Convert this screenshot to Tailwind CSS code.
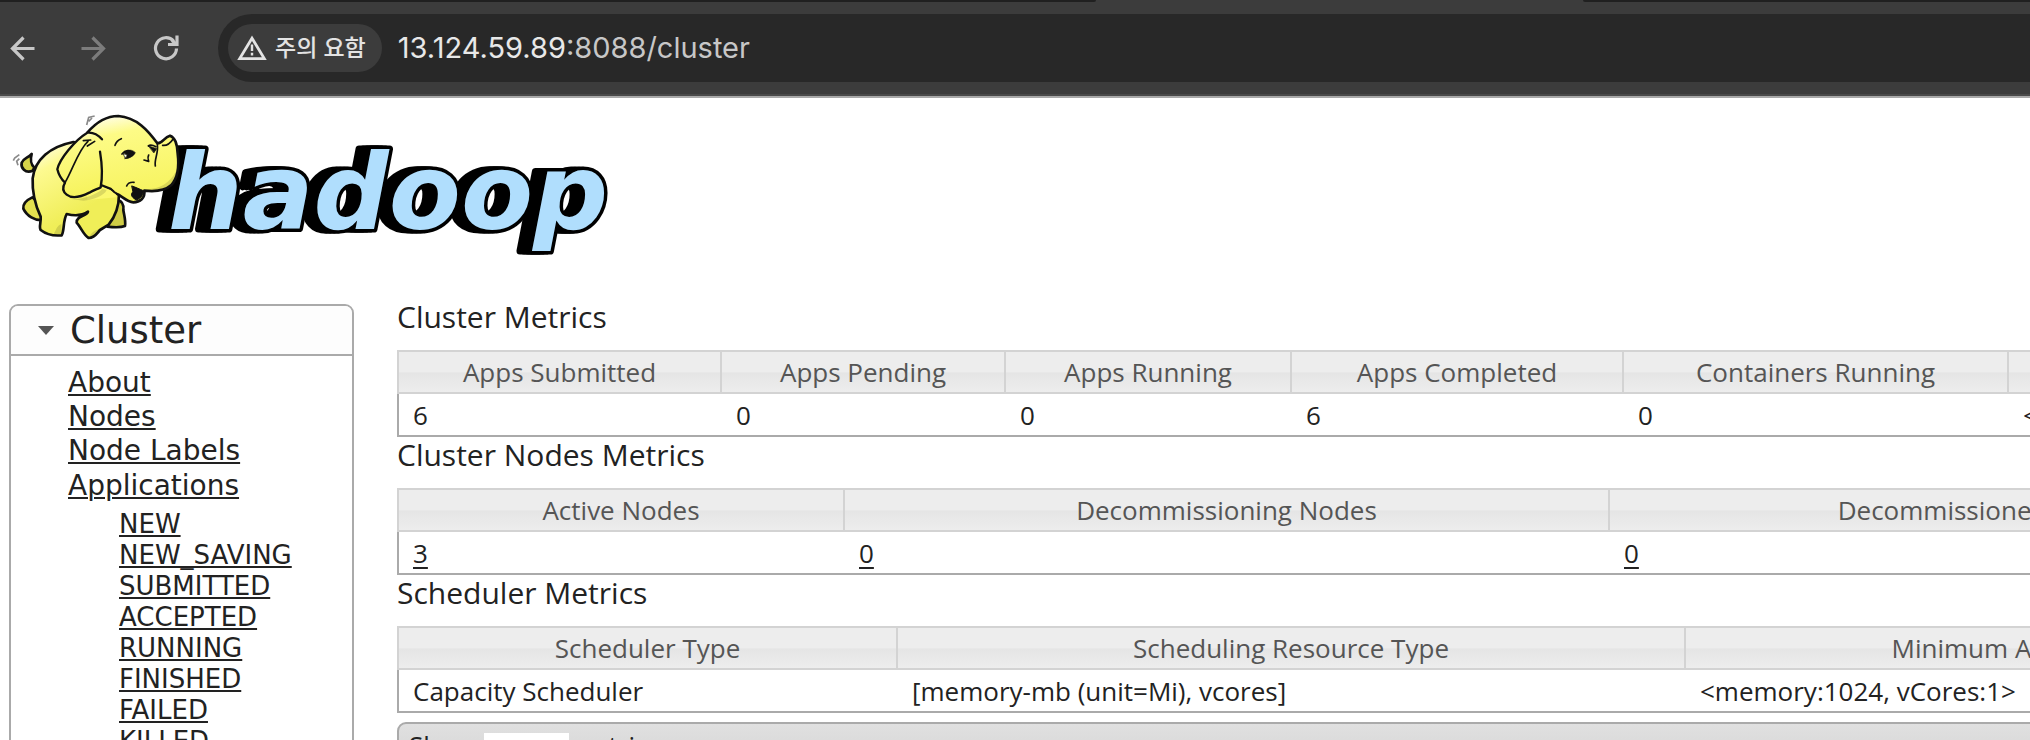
<!DOCTYPE html>
<html lang="ko">
<head>
<meta charset="utf-8">
<title>All Applications</title>
<script src="https://cdn.jsdelivr.net/npm/@tailwindcss/browser@4"></script>
</head>
<body class="bg-white text-[#222222] overflow-hidden h-screen">

<!-- Browser toolbar -->
<header class="font-['Inter','Noto_Sans_CJK_KR',sans-serif]">
  <div class="flex h-[2px] bg-[#3c3c3c]">
    <div class="w-[54%] rounded-br-[2px] bg-[#202020]"></div>
    <div class="w-[24%]"></div>
    <div class="flex-1 rounded-bl-[2px] bg-[#202020]"></div>
  </div>
  <div class="flex items-center h-[96px] bg-[#3c3c3c] border-b-2 border-[#a9a9a9] shadow-[inset_0_-2px_0_#4a4a4a] pb-[2px] pl-[10px]">
    <button type="button" aria-label="Back" class="text-[#c7c7c7]">
      <svg class="size-[25px]" viewBox="0 0 25 25" fill="none" stroke="currentColor" stroke-width="3.200"><path d="M24.500 12.500H3M13.500 1.500L2.500 12.500l11 11"/></svg>
    </button>
    <button type="button" aria-label="Forward" class="ml-[46px] text-[#7c7c7c]">
      <svg class="size-[25px]" viewBox="0 0 25 25" fill="none" stroke="currentColor" stroke-width="3.200"><path d="M.5 12.500H22M11.500 1.500l11 11-11 11"/></svg>
    </button>
    <button type="button" aria-label="Reload" class="ml-[47px] text-[#c7c7c7]">
      <svg class="size-[26px]" viewBox="0 0 26 26" fill="none" stroke="currentColor" stroke-width="3.200"><path d="M23.500 13.500A10.500 10.500 0 1 1 20.800 6.200"/><path d="M24 .5V9.500H15"/><path d="M19 5.500l4 3.500"/></svg>
    </button>
    <div class="ml-[39px] flex flex-1 items-center h-[68px] rounded-l-full bg-[#282828] pl-[10px]">
      <button type="button" class="flex items-center h-12 rounded-full bg-[#3c3c3c] pl-[9px] pr-4 gap-2 text-[#e3e3e3]">
        <svg class="w-[30px] h-[26px]" viewBox="0 0 30 26" fill="none" stroke="currentColor"><path stroke-width="2.800" d="M15 3.200L27.300 23.600H2.700z"/><path stroke-width="2.400" d="M15 9.500v6.500M15 17.800v2.600"/></svg>
        <span class="text-[23px] leading-8 font-medium">주의 요함</span>
      </button>
      <div class="ml-4 text-[29px] leading-9 text-[#c7c7c7]"><span class="text-[#e8e8e8]">13.124.59.89</span>:8088/cluster</div>
    </div>
  </div>
</header>

<!-- Hadoop logo -->
<a href="#" aria-label="Hadoop" class="block w-[620px]">
  <svg class="block w-full" viewBox="0 98 620 172">
    <text x="168" y="229" font-family="DejaVu Sans" font-weight="bold" font-style="oblique" font-size="105" fill="#b0defd" stroke="#000" stroke-width="7" stroke-linejoin="round" paint-order="stroke" class="[filter:drop-shadow(-4px_0_0_#000)_drop-shadow(-8px_0_0_#000)]">hadoop</text>
    <svg x="0" y="100" width="200" height="160" viewBox="0 0 600 480">
      <defs>
        <linearGradient id="skin" x1="0.3" y1="0" x2="0.5" y2="1"><stop offset="0" stop-color="#fffde0"/><stop offset=".2" stop-color="#fdfb86"/><stop offset="1" stop-color="#f6f35c"/></linearGradient>
        <linearGradient id="back" x1="0" y1="0" x2="0.4" y2="0.8"><stop offset="0" stop-color="#fff"/><stop offset=".35" stop-color="#fdfa90"/><stop offset="1" stop-color="#f0ee58"/></linearGradient>
      </defs>
      <g stroke="#111" stroke-width="8" stroke-linejoin="round" stroke-linecap="round">
        <path fill="#d6d34a" d="M98 212C75 222 62 202 65 188C70 175 84 174 95 162C90 182 92 192 103 203Z"/>
        <path fill="#e3e04f" d="M97 292C80 300 68 312 70 326C80 348 105 362 127 360L118 310Z"/>
        <path fill="#d0cd46" d="M352 300C366 303 372 312 370 330C372 345 378 362 375 378C360 384 340 382 322 380Z"/>
        <path fill="url(#back)" d="M220 126C150 140 105 178 98 235C96 280 108 320 122 350C124 366 116 380 122 390C140 404 165 408 185 406C194 390 188 365 200 342C220 347 245 348 264 335C262 350 228 346 230 368C245 385 250 405 266 414C285 413 292 398 300 390L326 374C345 350 357 325 357 284L330 150Z"/>
        <path fill="url(#skin)" d="M262 98C290 65 320 48 355 48C410 52 445 92 472 130C488 130 492 112 510 107C525 112 532 136 533 160C538 200 533 235 513 256C493 274 460 275 433 272C436 294 420 307 400 307C382 306 372 294 357 285C345 280 338 274 332 267L262 240Z"/>
        <path fill="none" stroke-width="5" d="M472 134C476 160 462 178 466 198M488 136C502 138 512 128 520 116"/>
        <path fill="#fbf86e" stroke="none" d="M258 240L345 276L350 292L262 300Z"/>
        <path fill="url(#skin)" stroke-width="7" d="M300 155C305 185 309 225 302 262C290 268 280 271 268 278C240 292 215 296 200 284C187 274 188 260 195 248C184 238 176 224 172 208C178 178 225 120 262 98C280 96 292 102 306 118"/>
        <path fill="none" stroke-width="5" d="M195 248C220 205 235 150 264 124M250 122L272 120M262 138L284 124M345 136C348 126 354 120 364 116M366 162C376 150 390 148 396 160M445 138C452 132 460 136 468 140M432 180L446 184M446 165C442 172 444 176 446 184M380 258C384 248 392 246 402 247M332 267C338 274 345 280 357 285"/>
        <path fill="#111" stroke-width="2" d="M370 158C384 148 396 148 406 158C400 170 386 176 374 176C384 170 384 164 370 158ZM446 138L470 146L462 158Z"/>
        <path fill="#fff" stroke-width="2" d="M371 162L382 164L376 174Z"/>
        <path fill="#111" stroke-width="3" d="M396 258C408 262 420 268 430 272C430 284 424 294 410 300C396 294 390 284 398 276Z"/>
      </g>
      <g fill="#000" opacity=".12">
        <path d="M208 296C240 302 290 284 308 266L320 270C312 288 280 300 250 302Z"/>
        <path d="M160 404C168 392 170 376 184 372L186 404ZM268 412C272 400 286 388 300 388C292 400 284 412 268 412ZM440 268C480 266 510 250 530 210C526 250 500 276 440 268Z"/>
      </g>
      <path fill="none" stroke="#8a8a8a" stroke-width="5" d="M260 75L266 52L284 48M266 64L276 54M40 182L44 174L58 164M54 196L50 184L58 176"/>
    </svg>
  </svg>
</a>

<div class="flex items-start pl-[9px] pt-[34px]">
  <!-- Side navigation -->
  <nav class="w-[345px] shrink-0 h-[600px] rounded-t-[9px] border-2 border-[#aaaaaa] font-['DejaVu_Sans',sans-serif]">
    <h3 class="flex items-center h-[50px] border-b-2 border-[#aaaaaa] bg-[#fdfdfd] rounded-t-[7px] pl-[27px] text-[37px] leading-10">
      <svg class="w-4 h-[10px] mr-4" viewBox="0 0 16 10" aria-hidden="true"><path fill="#555" d="M0 1h16L8 10z"/></svg>
      <span class="pt-px">Cluster</span>
    </h3>
    <ul class="pt-[10px] pl-[57px] text-[28px] leading-[34px]">
      <li><a href="#" class="underline decoration-2 underline-offset-2">About</a></li>
      <li><a href="#" class="underline decoration-2 underline-offset-2">Nodes</a></li>
      <li><a href="#" class="underline decoration-2 underline-offset-2">Node Labels</a></li>
      <li class="pt-px"><a href="#" class="underline decoration-2 underline-offset-2">Applications</a>
        <ul class="pt-[6px] pl-[51px] text-[26px] leading-[31px]">
          <li><a href="#" class="underline decoration-2 underline-offset-2">NEW</a></li>
          <li><a href="#" class="underline decoration-2 underline-offset-2">NEW_SAVING</a></li>
          <li><a href="#" class="underline decoration-2 underline-offset-2">SUBMITTED</a></li>
          <li><a href="#" class="underline decoration-2 underline-offset-2">ACCEPTED</a></li>
          <li><a href="#" class="underline decoration-2 underline-offset-2">RUNNING</a></li>
          <li><a href="#" class="underline decoration-2 underline-offset-2">FINISHED</a></li>
          <li><a href="#" class="underline decoration-2 underline-offset-2">FAILED</a></li>
          <li><a href="#" class="underline decoration-2 underline-offset-2">KILLED</a></li>
        </ul>
      </li>
    </ul>
  </nav>

  <!-- Metrics -->
  <main class="ml-[43px] flex-1 min-w-0 overflow-hidden -mt-[5px] font-['Open_Sans','Noto_Sans_CJK_KR',sans-serif]">
    <h3 id="cluster-metrics" class="h-[51px] text-[30px] leading-9">Cluster Metrics</h3>
    <table aria-labelledby="cluster-metrics" class="table-fixed w-[2400px] border-separate border-spacing-0 text-[26px] leading-8">
      <colgroup><col class="w-[325px]"><col class="w-[284px]"><col class="w-[286px]"><col class="w-[332px]"><col class="w-[385px]"><col></colgroup>
      <thead><tr class="h-11 text-[#555555]">
        <th class="border-2 border-[#d3d3d3] bg-[linear-gradient(#ededed_50%,#e5e5e5_52%,#ededed)] p-0 font-normal">Apps Submitted</th>
        <th class="border-2 border-l-0 border-[#d3d3d3] bg-[linear-gradient(#ededed_50%,#e5e5e5_52%,#ededed)] p-0 font-normal">Apps Pending</th>
        <th class="border-2 border-l-0 border-[#d3d3d3] bg-[linear-gradient(#ededed_50%,#e5e5e5_52%,#ededed)] p-0 font-normal">Apps Running</th>
        <th class="border-2 border-l-0 border-[#d3d3d3] bg-[linear-gradient(#ededed_50%,#e5e5e5_52%,#ededed)] p-0 font-normal">Apps Completed</th>
        <th class="border-2 border-l-0 border-[#d3d3d3] bg-[linear-gradient(#ededed_50%,#e5e5e5_52%,#ededed)] p-0 font-normal">Containers Running</th>
        <th class="border-2 border-l-0 border-[#d3d3d3] bg-[linear-gradient(#ededed_50%,#e5e5e5_52%,#ededed)] p-0 font-normal">Used Resources</th>
      </tr></thead>
      <tbody><tr class="h-[43px]">
        <td class="border-b-2 border-l-2 border-[#aaaaaa] py-0 px-[14px]">6</td>
        <td class="border-b-2 border-[#aaaaaa] py-0 px-[14px]">0</td>
        <td class="border-b-2 border-[#aaaaaa] py-0 px-[14px]">0</td>
        <td class="border-b-2 border-[#aaaaaa] py-0 px-[14px]">6</td>
        <td class="border-b-2 border-[#aaaaaa] py-0 px-[14px]">0</td>
        <td class="border-b-2 border-[#aaaaaa] py-0 px-[14px]">&lt;memory:0, vCores:0&gt;</td>
      </tr></tbody>
    </table>

    <h3 id="nodes-metrics" class="h-[51px] text-[30px] leading-9">Cluster Nodes Metrics</h3>
    <table aria-labelledby="nodes-metrics" class="table-fixed w-[2400px] border-separate border-spacing-0 text-[26px] leading-8">
      <colgroup><col class="w-[448px]"><col class="w-[765px]"><col class="w-[752px]"><col></colgroup>
      <thead><tr class="h-11 text-[#555555]">
        <th class="border-2 border-[#d3d3d3] bg-[linear-gradient(#ededed_50%,#e5e5e5_52%,#ededed)] p-0 font-normal">Active Nodes</th>
        <th class="border-2 border-l-0 border-[#d3d3d3] bg-[linear-gradient(#ededed_50%,#e5e5e5_52%,#ededed)] p-0 font-normal">Decommissioning Nodes</th>
        <th class="border-2 border-l-0 border-[#d3d3d3] bg-[linear-gradient(#ededed_50%,#e5e5e5_52%,#ededed)] p-0 font-normal">Decommissioned Nodes</th>
        <th class="border-2 border-l-0 border-[#d3d3d3] bg-[linear-gradient(#ededed_50%,#e5e5e5_52%,#ededed)] p-0 font-normal">Lost Nodes</th>
      </tr></thead>
      <tbody><tr class="h-[43px]">
        <td class="border-b-2 border-l-2 border-[#aaaaaa] py-0 px-[14px]"><a href="#" class="underline decoration-2 underline-offset-4">3</a></td>
        <td class="border-b-2 border-[#aaaaaa] py-0 px-[14px]"><a href="#" class="underline decoration-2 underline-offset-4">0</a></td>
        <td class="border-b-2 border-[#aaaaaa] py-0 px-[14px]"><a href="#" class="underline decoration-2 underline-offset-4">0</a></td>
        <td class="border-b-2 border-[#aaaaaa] py-0 px-[14px]"><a href="#" class="underline decoration-2 underline-offset-4">0</a></td>
      </tr></tbody>
    </table>

    <h3 id="scheduler-metrics" class="h-[51px] text-[30px] leading-9">Scheduler Metrics</h3>
    <table aria-labelledby="scheduler-metrics" class="table-fixed w-[2400px] border-separate border-spacing-0 text-[26px] leading-8">
      <colgroup><col class="w-[501px]"><col class="w-[788px]"><col class="w-[656px]"><col></colgroup>
      <thead><tr class="h-11 text-[#555555]">
        <th class="border-2 border-[#d3d3d3] bg-[linear-gradient(#ededed_50%,#e5e5e5_52%,#ededed)] p-0 font-normal">Scheduler Type</th>
        <th class="border-2 border-l-0 border-[#d3d3d3] bg-[linear-gradient(#ededed_50%,#e5e5e5_52%,#ededed)] p-0 font-normal">Scheduling Resource Type</th>
        <th class="border-2 border-l-0 border-[#d3d3d3] bg-[linear-gradient(#ededed_50%,#e5e5e5_52%,#ededed)] p-0 font-normal">Minimum Allocation</th>
        <th class="border-2 border-l-0 border-[#d3d3d3] bg-[linear-gradient(#ededed_50%,#e5e5e5_52%,#ededed)] p-0 font-normal">Maximum Allocation</th>
      </tr></thead>
      <tbody><tr class="h-[43px]">
        <td class="border-b-2 border-l-2 border-[#aaaaaa] py-0 px-[14px]">Capacity Scheduler</td>
        <td class="border-b-2 border-[#aaaaaa] py-0 px-[14px]">[memory-mb (unit=Mi), vcores]</td>
        <td class="border-b-2 border-[#aaaaaa] py-0 px-[14px]">&lt;memory:1024, vCores:1&gt;</td>
        <td class="border-b-2 border-[#aaaaaa] py-0 px-[14px]">&lt;memory:8192, vCores:4&gt;</td>
      </tr></tbody>
    </table>

    <div class="mt-[9px] h-20 w-[2400px] rounded-tl-[9px] border-2 border-[#aaaaaa] bg-linear-to-b from-[#e0e0e0] to-[#cccccc] pl-[10px] pt-[9px] text-[26px] leading-6">
      <label class="flex items-start gap-[9px]">Show
        <select class="h-9 w-[85px] appearance-none bg-white pl-2"><option>20</option></select>
        entries</label>
    </div>
  </main>
</div>
</body>
</html>
